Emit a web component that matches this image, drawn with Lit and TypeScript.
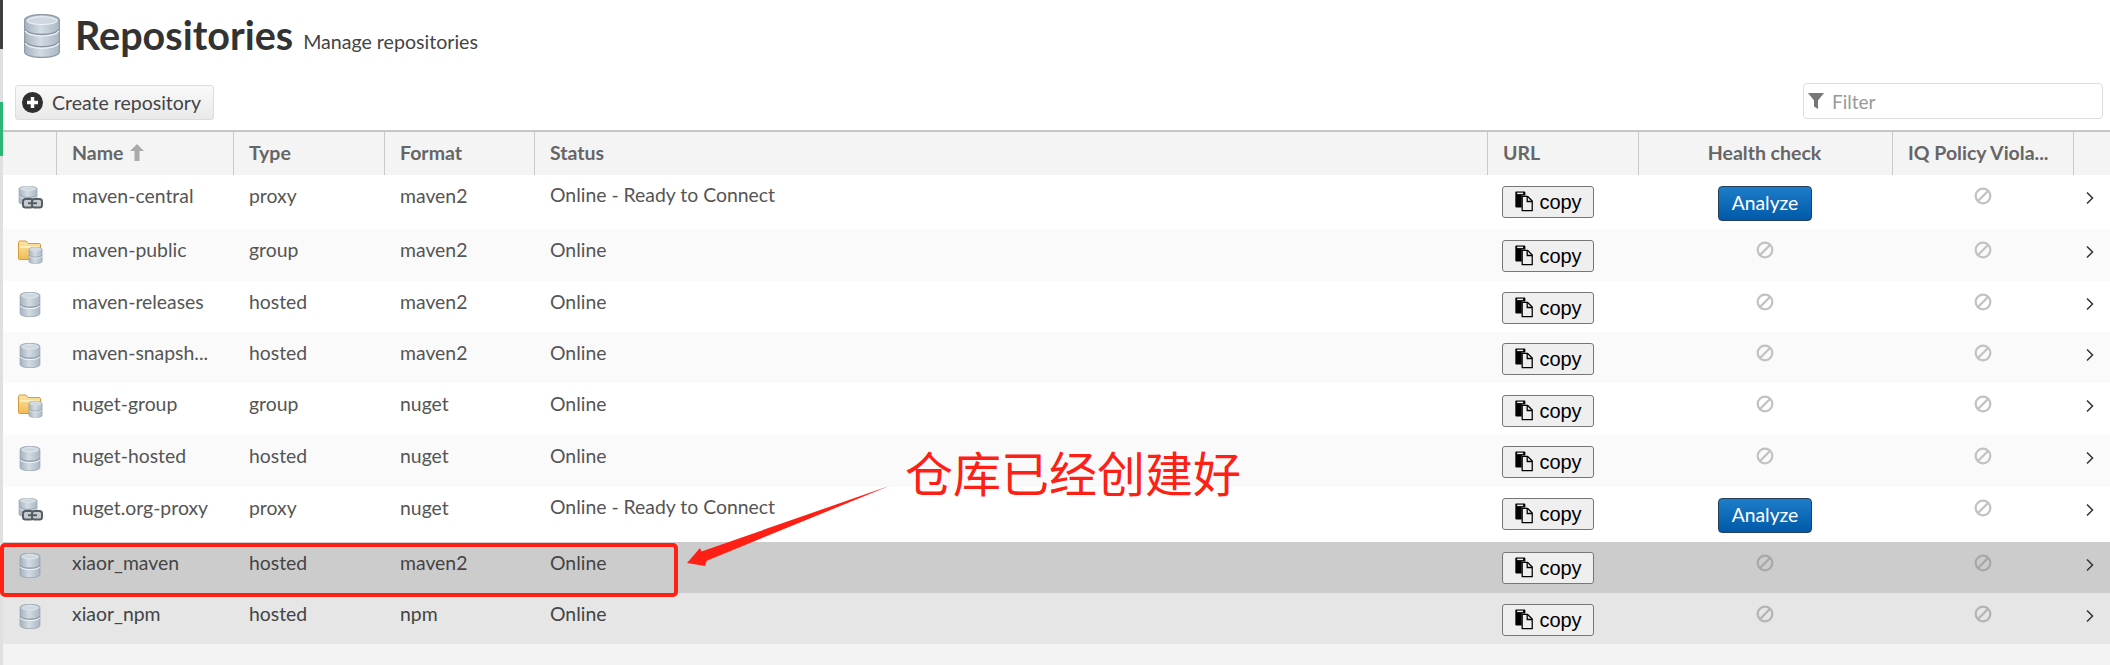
import { LitElement, html, css, svg } from "lit";
import { customElement } from "lit/decorators.js";

type Row = { name: string; type: string; format: string; status: string; kind: string; h: number; nudge?: number; analyze?: boolean; cls: string };

const ROWS: Row[] = [
  { name: "maven-central", type: "proxy", format: "maven2", status: "Online - Ready to Connect", kind: "proxy", h: 54, analyze: true, cls: "white" },
  { name: "maven-public", type: "group", format: "maven2", status: "Online", kind: "group", h: 52, cls: "alt" },
  { name: "maven-releases", type: "hosted", format: "maven2", status: "Online", kind: "hosted", h: 51, cls: "white" },
  { name: "maven-snapsh...", type: "hosted", format: "maven2", status: "Online", kind: "hosted", h: 51, cls: "alt" },
  { name: "nuget-group", type: "group", format: "nuget", status: "Online", kind: "group", h: 52, nudge: 1, cls: "white" },
  { name: "nuget-hosted", type: "hosted", format: "nuget", status: "Online", kind: "hosted", h: 52, cls: "alt" },
  { name: "nuget.org-proxy", type: "proxy", format: "nuget", status: "Online - Ready to Connect", kind: "proxy", h: 55, analyze: true, cls: "white" },
  { name: "xiaor_maven", type: "hosted", format: "maven2", status: "Online", kind: "hosted", h: 51, nudge: -1, cls: "selected" },
  { name: "xiaor_npm", type: "hosted", format: "npm", status: "Online", kind: "hosted", h: 51, cls: "hover" },
];

const dbDefs = svg`
  <defs>
    <linearGradient id="dbg" x1="0" y1="0" x2="1" y2="0">
      <stop offset="0" stop-color="#a4b2c0" />
      <stop offset="0.45" stop-color="#d3dbe3" />
      <stop offset="1" stop-color="#aab7c4" />
    </linearGradient>
    <linearGradient id="fog" x1="0" y1="0" x2="0" y2="1">
      <stop offset="0" stop-color="#fbe6a4" />
      <stop offset="1" stop-color="#f0bb55" />
    </linearGradient>
  </defs>`;

const dbBody = svg`
  <path d="M1 6c0-3.3 7.6-5.5 17-5.5S35 2.700 35 6v31c0 3.300-7.600 5.500-17 5.500S1 40.300 1 37z" fill="url(#dbg)" stroke="#8f9aa5" stroke-width="1.200" />
  <ellipse cx="18" cy="6.500" rx="14.500" ry="3.800" fill="#cfd8e0" stroke="#eef2f5" stroke-width="1" />
`;

const dbShape = svg`
  ${dbBody}
  <path d="M1.500 15c2 3.200 9 5 16.500 5s14.500-1.800 16.500-5M1.500 27c2 3.200 9 5 16.500 5s14.500-1.800 16.500-5" fill="none" stroke="#8995a1" stroke-width="1.300" />
  <path d="M1.500 16.500c2 3.200 9 5 16.500 5s14.500-1.800 16.500-5M1.500 28.500c2 3.200 9 5 16.500 5s14.500-1.800 16.500-5" fill="none" stroke="#eef2f5" stroke-width="1.200" />
`;

const dbSmall = svg`
  ${dbBody}
  <path d="M1.500 21c2 3.200 9 5 16.500 5s14.500-1.800 16.500-5" fill="none" stroke="#8995a1" stroke-width="1.800" />
  <path d="M1.500 23.500c2 3.200 9 5 16.500 5s14.500-1.800 16.500-5" fill="none" stroke="#eef2f5" stroke-width="1.800" />
`;

function repoIcon(kind: string) {
  if (kind === "hosted") {
    return html`<svg class="ico hosted" width="22" height="25" viewBox="0 0 36 43">${dbDefs}${dbSmall}</svg>`;
  }
  if (kind === "proxy") {
    return html`<svg class="ico" width="25" height="24" viewBox="0 0 25 24">
      ${dbDefs}
      <g transform="translate(0.500 0) scale(0.53 0.44)">${dbSmall}</g>
      <rect x="5" y="13" width="10" height="8.500" rx="2.500" fill="#c6cbd0" stroke="#565c62" stroke-width="2" />
      <rect x="14" y="13" width="10" height="8.500" rx="2.500" fill="#c6cbd0" stroke="#565c62" stroke-width="2" />
      <path d="M10 17.200h9" stroke="#565c62" stroke-width="2" />
    </svg>`;
  }
  return html`<svg class="ico" width="25" height="24" viewBox="0 0 25 24">
    ${dbDefs}
    <path d="M0.500 2.500c0-1 .6-1.500 1.500-1.500h6l2 2.500h11c1 0 1.500.5 1.500 1.500v13.500c0 .6-.4 1-1 1H1.500c-.6 0-1-.4-1-1z" fill="url(#fog)" stroke="#d99a35" />
    <path d="M1.500 7h20" stroke="#fff4cc" stroke-width="1.500" />
    <g transform="translate(10.500 7) scale(0.39 0.39)">${dbSmall}</g>
  </svg>`;
}

const banIcon = html`<svg class="ban" width="18" height="18" viewBox="0 0 16 16">
  <circle cx="8" cy="8" r="6.500" fill="none" stroke="currentColor" stroke-width="2" />
  <path d="M3.800 12.200 12.200 3.800" stroke="currentColor" stroke-width="2" />
</svg>`;

const copyIcon = html`<svg width="20" height="21" viewBox="0 0 21 23">
  <path d="M1 1.500C1 .8 1.500.5 2 .5h9c.6 0 1 .3 1 1V5H8v13H2c-.6 0-1-.4-1-1z" fill="#000" />
  <rect x="3" y="1.800" width="6.500" height="1.600" fill="#efefef" />
  <path d="M8.500 6h6l5 5v10.500h-11z" fill="#efefef" stroke="#000" stroke-width="1.400" stroke-linejoin="round" />
  <path d="M14 6v5.500h5.500" fill="none" stroke="#000" stroke-width="1.400" />
</svg>`;

@customElement("app-root")
export class AppRoot extends LitElement {
  static styles = css`
    :host {
      display: block;
      width: 2110px;
      height: 665px;
      position: relative;
      overflow: hidden;
      background: #fff;
      font-family: Lato, "Liberation Sans", sans-serif;
      color: #444;
    }
    .page { display: flex; height: 665px; }
    .rail { width: 3px; flex: none; display: flex; flex-direction: column; background: #e0e0e0; }
    .rail .dark { height: 49px; background: #3f3f3f; }
    .rail .green { height: 54px; margin-top: 53px; background: #2bb673; }
    .main { flex: 1; min-width: 0; display: flex; flex-direction: column; }

    .head { padding: 14px 0 0 20px; display: flex; align-items: flex-start; height: 44px; }
    .head svg { flex: none; display: block; }
    .title { margin-left: 14px; font-size: 39.500px; font-weight: 700; line-height: 52px; color: #333; height: 44px; margin-top: -5px; }
    .sub { margin-left: 10px; font-size: 19.600px; line-height: 24px; color: #444; margin-top: 16px; }

    .tools { height: 72px; display: flex; justify-content: space-between; align-items: flex-start; box-sizing: border-box; padding: 27px 7px 0 12px; }
    .create { width: 199px; height: 35px; box-sizing: border-box; border: 1px solid #ddd; border-radius: 3px; background: linear-gradient(#fafafa, #e9e9e9); display: flex; align-items: center; gap: 9px; padding: 0 0 0 6px; font: inherit; font-size: 19.500px; color: #444; }
    .filter { width: 300px; height: 36px; margin-top: -2px; box-sizing: border-box; border: 1px solid #ddd; border-radius: 4px; display: flex; align-items: center; gap: 8px; padding-left: 4px; color: #999; font-size: 19px; }

    .thead, .tr { display: grid; grid-template-columns: 53px 177px 151px 150px 953px 151px 254px 181px 37px; }
    .thead { height: 45px; box-sizing: border-box; border-top: 2px solid #c6c6c6; background: #f4f4f4; font-size: 19.500px; font-weight: 700; color: #666; }
    .th { border-left: 1px solid #c9c9c9; padding: 0 0 3px 15px; display: flex; align-items: center; gap: 7px; white-space: nowrap; overflow: hidden; }
    .th:first-child { border-left: 0; }
    .th.center { justify-content: center; padding: 0 2px 3px 0; }

    .white { background: #fff; }
    .alt { background: #fafafa; }
    .selected { background: #ccc; }
    .hover { background: #e6e6e6; }
    .td { padding: 11px 0 0 16px; font-size: 19.400px; line-height: 20px; color: #555; white-space: nowrap; overflow: hidden; }
    .selected .td, .hover .td { color: #444; }
    .td.iconcell { padding: 11px 0 0 15px; }
    .td.raised { padding-top: 10px; }
    .td.url { padding: 11px 0 0 15px; }
    .td.center { text-align: center; padding: 11px 0 0; }
    .ico { display: block; }
    .ico.hosted { margin-left: 1px; }
    .ban { display: inline-block; color: #c2c2c2; margin-top: 1px; }
    .selected .ban { color: #a8a8a8; }
    .hover .ban { color: #b4b4b4; }
    .copy { width: 92px; height: 32px; box-sizing: border-box; border: 1px solid #767676; border-radius: 3px; background: #efefef; display: flex; align-items: center; justify-content: center; gap: 5px; font-family: "Liberation Sans", Arial, sans-serif; font-size: 20px; color: #000; padding: 0; }
    .copy svg { display: block; margin-top: -1px; }
    .analyze { width: 94px; height: 35px; box-sizing: border-box; border: 1px solid #24405c; border-radius: 4px; background: linear-gradient(#1d7dc8, #0059a8); color: #fff; font: inherit; font-size: 19.300px; padding: 0 0 2px; display: inline-block; vertical-align: top; }
    .chev { display: block; margin: 5px 0 0 12px; }
    .td.more { padding: 11px 0 0; }
    .fill { flex: 1; background: #f3f3f3; }

    .note { position: absolute; left: 905px; top: 438px; font-family: "Noto Sans CJK SC", sans-serif; font-size: 48px; line-height: 66px; color: #ff2015; white-space: nowrap; }
    .box { position: absolute; left: 0; top: 543px; width: 678px; height: 54px; box-sizing: border-box; border: 4px solid #ff2015; border-radius: 5px; }
    .arrow { position: absolute; left: 680px; top: 480px; }
  `;

  render() {
    return html`
      <div class="page">
        <div class="rail"><div class="dark"></div><div class="green"></div></div>
        <div class="main">
          <div class="head">
            <svg width="38" height="44" viewBox="0 0 36 43">${dbDefs}${dbShape}</svg>
            <div class="title">Repositories</div>
            <div class="sub">Manage repositories</div>
          </div>
          <div class="tools">
            <button class="create">
              <svg width="21" height="21" viewBox="0 0 21 21"><circle cx="10.500" cy="10.500" r="10.500" fill="#2f2f2f" /><path d="M10.500 5v11M5 10.500h11" stroke="#fff" stroke-width="3.500" /></svg>
              Create repository
            </button>
            <div class="filter">
              <svg width="16" height="18" viewBox="0 0 16 18"><path d="M0 1h16L10 8.500V17l-4-2.500V8.500z" fill="#777" /></svg>
              Filter
            </div>
          </div>
          <div class="thead">
            <div class="th"></div>
            <div class="th">Name
              <svg width="14" height="17" viewBox="0 0 14 17"><path d="M7 0l7 7H9.500v10h-5V7H0z" fill="#aaa" /></svg>
            </div>
            <div class="th">Type</div>
            <div class="th">Format</div>
            <div class="th">Status</div>
            <div class="th">URL</div>
            <div class="th center">Health check</div>
            <div class="th">IQ Policy Viola...</div>
            <div class="th"></div>
          </div>
          ${ROWS.map((r) => html`
            <div class="tr ${r.cls}" style="height:${r.h}px">
              <div class="td iconcell">${repoIcon(r.kind)}</div>
              <div class="td">${r.name}</div>
              <div class="td">${r.type}</div>
              <div class="td">${r.format}</div>
              <div class="td ${r.analyze ? "raised" : ""}">${r.status}</div>
              <div class="td url"><button class="copy" style="margin-top:${r.nudge ?? 0}px">${copyIcon}copy</button></div>
              <div class="td center">${r.analyze ? html`<button class="analyze">Analyze</button>` : banIcon}</div>
              <div class="td center">${banIcon}</div>
              <div class="td more">
                <svg class="chev" width="10" height="14" viewBox="0 0 10 14"><path d="M2 1.500 7.500 7 2 12.500" fill="none" stroke="#333" stroke-width="1.500" /></svg>
              </div>
            </div>
          `)}
          <div class="fill"></div>
        </div>
      </div>
      <div class="box"></div>
      <svg class="arrow" width="212" height="92" viewBox="0 0 212 92">
        <path d="M209 6 21.500 71.500 20 68 7 83 25 86 26.700 80.700z" fill="#ff2015" />
      </svg>
      <div class="note">仓库已经创建好</div>
    `;
  }
}
